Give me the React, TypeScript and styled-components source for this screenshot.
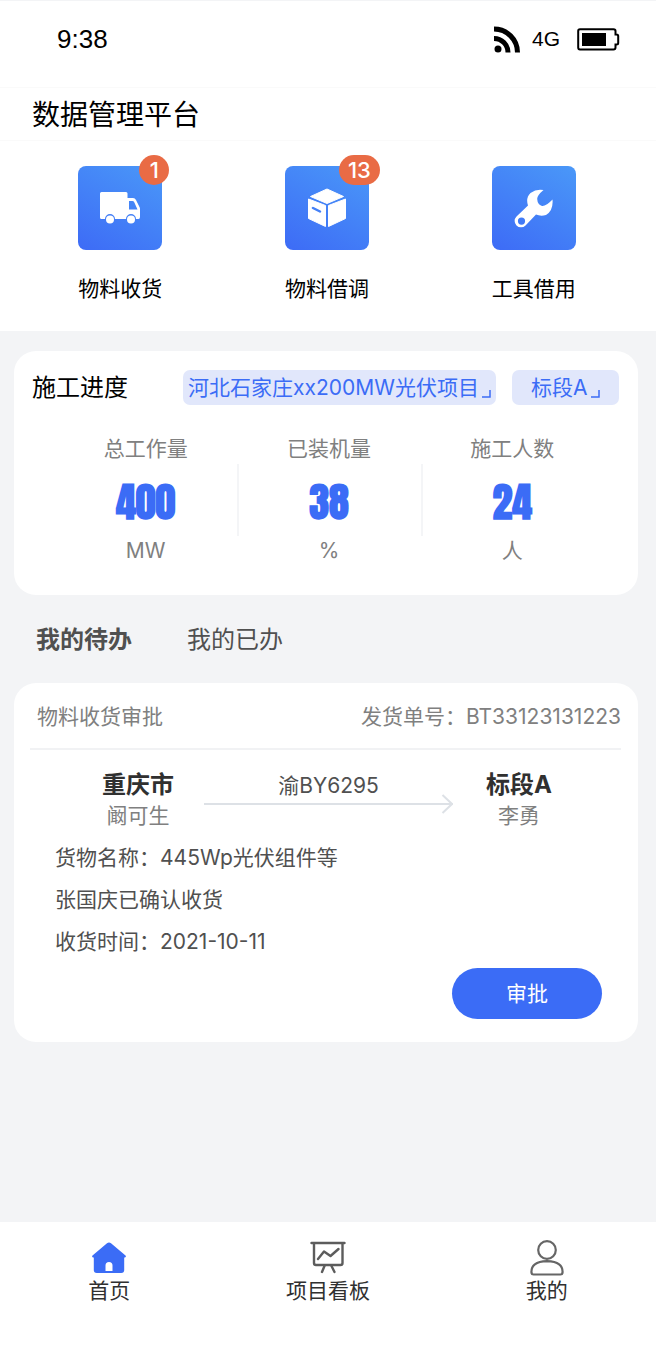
import React, { useState } from "react";
import styled, { createGlobalStyle } from "styled-components";

const blue = "#3b6cf6";

const GlobalStyle = createGlobalStyle`
  *, *::before, *::after { box-sizing: border-box; }
  body {
    margin: 0;
    background: #f3f4f6;
    color: #000;
    font-family: "Inter", "Noto Sans CJK SC", sans-serif;
    font-size: 21px;
    line-height: 30px;
  }
  button, select { font: inherit; color: inherit; border: 0; padding: 0; margin: 0; background: none; cursor: pointer; }
  h1, h2, p, dl, dt, dd { margin: 0; font-weight: 400; }
  svg { display: block; flex: none; }
`;

const Page = styled.div`
  min-height: 100vh;
  display: flex;
  flex-direction: column;
`;

const StatusBar = styled.div`
  display: flex;
  align-items: center;
  height: 87px;
  padding: 0 36px 10px 57px;
  background: #fff;
  border-top: 1px solid #f3f4f6;
  font-family: "Liberation Sans", sans-serif;
`;

const Clock = styled.time`
  margin-right: auto;
  font-size: 26px;
`;

const Network = styled.span`
  margin: 0 17px 0 11px;
`;

const Header = styled.header`
  padding: 7px 32px 5px;
  background: #fff;
  border-top: 1px solid #fafafa;
  border-bottom: 1px solid #fafafa;
`;

const Title = styled.h1`
  font-size: 28px;
  line-height: 40px;
`;

const Shortcuts = styled.nav`
  display: grid;
  grid-template-columns: repeat(3, 1fr);
  justify-items: center;
  padding: 25px 19px 27px 17px;
  background: #fff;
`;

const Shortcut = styled.button`
  display: flex;
  flex-direction: column;
  align-items: center;
  gap: 24px;
`;

const Tile = styled.span`
  position: relative;
  display: flex;
  align-items: center;
  justify-content: center;
  width: 84px;
  height: 84px;
  border-radius: 8px;
  background: linear-gradient(30deg, #3d6bf6, #4a98f8);
`;

const Badge = styled.span<{ $wide: boolean }>`
  position: absolute;
  top: -11px;
  left: 100%;
  min-width: 30px;
  height: 30px;
  margin-left: ${(p) => (p.$wide ? -30 : -23)}px;
  padding: 0 9px;
  border-radius: 15px;
  background: #e96b45;
  color: #fff;
  font-size: 22px;
  font-weight: 500;
`;

const Card = styled.section`
  margin: 0 18px 0 14px;
  border-radius: 22px;
  background: #fff;
`;

const ProgressCard = styled(Card)`
  margin-top: 20px;
  padding: 19px 19px 29px 18px;
`;

const CardHead = styled.div`
  display: flex;
  align-items: center;
  gap: 16px;
`;

const CardTitle = styled.h2`
  margin-right: auto;
  font-size: 24px;
  line-height: 34px;
`;

const Picker = styled.label<{ $inset: number }>`
  display: flex;
  align-items: center;
  height: 35px;
  padding: 0 ${(p) => p.$inset}px;
  border-radius: 7px;
  background: #e1e7fb;
  color: ${blue};

  select { appearance: none; height: 35px; outline: none; }
  svg { margin: 12px 0 0 3px; }
`;

const Stats = styled.dl`
  display: grid;
  grid-template-columns: repeat(3, 1fr);
  margin: 29px 15px 0 22px;
  color: #808080;
  text-align: center;
`;

const Stat = styled.div`
  display: grid;
  grid-template-rows: 30px 72px 30px;
  position: relative;

  & + &::before {
    content: "";
    position: absolute;
    left: 0;
    top: 30px;
    height: 72px;
    border-left: 2px solid #f4f5f7;
  }
`;

const StatValue = styled.dd`
  color: ${blue};
  font-family: Impact, Anton, Roboto, sans-serif;
  font-size: 40px;
  font-weight: 700;
  line-height: 76px;
`;

const Tabs = styled.div`
  display: flex;
  gap: 55px;
  padding: 28px 36px 26px;
`;

const Tab = styled.button<{ $active: boolean }>`
  color: #505050;
  font-size: 24px;
  line-height: 34px;
  font-weight: ${(p) => (p.$active ? 700 : 400)};
`;

const TaskCard = styled(Card)`
  padding: 19px 17px 23px 16px;
`;

const TaskHead = styled.div`
  display: flex;
  justify-content: space-between;
  padding: 0 0 16px 7px;
  border-bottom: 2px solid #f1f2f4;
  color: #808080;
`;

const Route = styled.div`
  display: flex;
  align-items: flex-start;
  justify-content: space-between;
  padding: 18px 69px 0 72px;
`;

const Stop = styled.div`
  display: flex;
  flex-direction: column;
  align-items: center;
  color: #808080;

  strong {
    color: #303030;
    font-size: 24px;
    line-height: 33px;
    font-weight: 700;
  }
`;

const Leg = styled.div`
  flex: 1;
  margin: 3px 33px 0 30px;
  color: #505050;
  text-align: center;
`;

const ArrowRow = styled.div`
  display: flex;
  align-items: center;
  height: 20px;
  margin-top: -7px;

  &::before {
    content: "";
    flex: 1;
    height: 2px;
    margin-right: -12px;
    background: #dde1e6;
  }
`;

const Details = styled.div`
  display: flex;
  flex-direction: column;
  gap: 12px;
  padding: 12px 25px 11px;
  color: #505050;
`;

const Approve = styled.button`
  display: block;
  width: 150px;
  height: 51px;
  margin: 0 19px 0 auto;
  border-radius: 26px;
  background: ${blue};
  color: #fff;
`;

const BottomNav = styled.nav`
  display: grid;
  grid-template-columns: repeat(3, 1fr);
  margin-top: auto;
  padding: 18px 0 44px;
  background: #fff;
`;

const NavItem = styled.a`
  display: flex;
  flex-direction: column;
  align-items: center;
  color: #303030;
  text-decoration: none;
  line-height: 30px;
`;

const SignalIcon = () => (
  <svg width="27" height="27" viewBox="0 0 27 27" fill="none" stroke="#000" strokeWidth="5">
    <circle cx="4" cy="23" r="3.5" fill="#000" stroke="none" />
    <path d="M0 12.500A14 14 0 0 1 14 26.500" />
    <path d="M0 3A23.500 23.500 0 0 1 23.500 26.500" />
  </svg>
);

const BatteryIcon = () => (
  <svg width="43" height="23" viewBox="0 0 43 23">
    <path d="M3 1.200H36.500Q38.500 1.200 38.500 3V6.500H39.500Q41.200 6.500 41.200 8V15Q41.200 16.500 39.500 16.500H38.500V19.500Q38.500 21.500 36.500 21.500H3Q1.200 21.500 1.200 19.500V3Q1.200 1.200 3 1.200Z" fill="#fff" stroke="#000" strokeWidth="2" />
    <rect x="5" y="5" width="24" height="13" />
  </svg>
);

const TruckIcon = () => (
  <svg width="40" height="32" viewBox="0 0 40 32" fill="#fff">
    <path d="M1.500 0H26Q27.500 0 27.500 1.500V6H33Q35 6 36 8L39.500 15Q40 16 40 17V25Q40 27 38.500 27H36A5 5 0 0 0 26 27H15A5 5 0 0 0 5 27H1.500Q0 27 0 25.500V1.500Q0 0 1.500 0ZM29 9V17.500H37.500L34 9.800Q33.500 9 32.500 9Z" fillRule="evenodd" />
    <circle cx="10" cy="27.500" r="4" />
    <circle cx="31" cy="27.500" r="4" />
  </svg>
);

const BoxIcon = () => (
  <svg width="40" height="40" viewBox="0 0 40 40" fill="#fff" stroke="#fff" strokeWidth="1" strokeLinejoin="round">
    <path d="M20 1L36.500 8.500L20 15.500L3.500 8.500Z" />
    <path d="M1.500 11L18.500 17.500V38.500L1.500 30.500Z" />
    <path d="M21.500 17.500L38.500 11V30.500L21.500 38.500Z" />
    <path d="M6 20L13 23.500" stroke="#4480f7" strokeWidth="2.500" strokeLinecap="round" />
  </svg>
);

const WrenchIcon = () => (
  <svg width="40" height="40" viewBox="0 0 40 40" fill="#fff">
    <path d="M29.500 2Q23 7.500 23.200 11Q23.500 16.500 28 18Q32 18.500 38.500 11.500Q39.500 22.500 32 27Q26.500 28.500 22 26.500L11.500 37.500A6.300 6.300 0 0 1 2.500 28.500L14 17.500Q11.500 10 16.500 5Q22.500 .5 29.500 2ZM7.500 29.500A3.600 3.600 0 1 0 7.500 36.700A3.600 3.600 0 1 0 7.500 29.500Z" fillRule="evenodd" />
  </svg>
);

const CornerIcon = () => (
  <svg width="9" height="8" viewBox="0 0 9 8" fill="none" stroke={blue} strokeWidth="1.500">
    <path d="M0 7H8V0" />
  </svg>
);

const ArrowHead = () => (
  <svg width="12" height="20" viewBox="0 0 12 20" fill="none" stroke="#dde1e6" strokeWidth="2">
    <path d="M1.500 1L11 10L1.500 19" />
  </svg>
);

const HomeIcon = () => (
  <svg width="36" height="36" viewBox="0 0 36 36" fill={blue}>
    <path d="M16 3.300Q18 1.500 20 3.300L34.500 15.500Q35.500 17 34 17.500H33.200V30Q33.200 33 30.200 33H5.800Q2.800 33 2.800 30V17.500H2Q.5 17 1.500 15.500ZM14.500 31H21.500V25.500A3.500 3.500 0 0 0 14.500 25.500Z" fillRule="evenodd" />
  </svg>
);

const BoardIcon = () => (
  <svg width="36" height="36" viewBox="0 0 36 36" fill="none" stroke="#5c5c5c" strokeWidth="2.400" strokeLinecap="round" strokeLinejoin="round">
    <path d="M1.500 3H34.500M4 3V23Q4 25 6 25H30.500Q32.500 25 32.500 23V3" />
    <path d="M8 19L14 11.500L20.500 16L28.500 9M14.500 26L12 32M21.500 26L24.500 32" />
  </svg>
);

const UserIcon = () => (
  <svg width="36" height="36" viewBox="0 0 36 36" fill="none" stroke="#666" strokeWidth="2.200">
    <circle cx="18" cy="10" r="8.800" />
    <path d="M2.500 33Q1.500 21.500 18 21.200Q34.500 21.500 33.500 33Q33.300 34.500 31.500 34.500H4.500Q2.700 34.500 2.500 33Z" />
  </svg>
);

const shortcuts = [
  { label: "物料收货", count: 1, Icon: TruckIcon },
  { label: "物料借调", count: 13, Icon: BoxIcon },
  { label: "工具借用", count: 0, Icon: WrenchIcon },
];

const stats = [
  { label: "总工作量", value: 400, unit: "MW" },
  { label: "已装机量", value: 38, unit: "%" },
  { label: "施工人数", value: 24, unit: "人" },
];

const navItems = [
  { label: "首页", Icon: HomeIcon },
  { label: "项目看板", Icon: BoardIcon },
  { label: "我的", Icon: UserIcon },
];

export default function App() {
  const [tab, setTab] = useState(0);
  return (
    <Page>
      <GlobalStyle />
      <StatusBar>
        <Clock>9:38</Clock>
        <SignalIcon />
        <Network>4G</Network>
        <BatteryIcon />
      </StatusBar>
      <Header>
        <Title>数据管理平台</Title>
      </Header>
      <Shortcuts>
        {shortcuts.map(({ label, count, Icon }) => (
          <Shortcut key={label} type="button">
            <Tile>
              <Icon />
              {count > 0 && <Badge $wide={count > 9}>{count}</Badge>}
            </Tile>
            {label}
          </Shortcut>
        ))}
      </Shortcuts>

      <ProgressCard>
        <CardHead>
          <CardTitle>施工进度</CardTitle>
          <Picker $inset={5}>
            <select aria-label="项目">
              <option>河北石家庄xx200MW光伏项目</option>
            </select>
            <CornerIcon />
          </Picker>
          <Picker $inset={19}>
            <select aria-label="标段">
              <option>标段A</option>
            </select>
            <CornerIcon />
          </Picker>
        </CardHead>
        <Stats>
          {stats.map((s) => (
            <Stat key={s.label}>
              <dt>{s.label}</dt>
              <StatValue>{s.value}</StatValue>
              <dd>{s.unit}</dd>
            </Stat>
          ))}
        </Stats>
      </ProgressCard>

      <Tabs role="tablist">
        {["我的待办", "我的已办"].map((name, i) => (
          <Tab key={name} type="button" role="tab" aria-selected={tab === i} $active={tab === i} onClick={() => setTab(i)}>
            {name}
          </Tab>
        ))}
      </Tabs>

      <TaskCard>
        <TaskHead>
          <span>物料收货审批</span>
          <span>发货单号：BT33123131223</span>
        </TaskHead>
        <Route>
          <Stop>
            <strong>重庆市</strong>
            <span>阚可生</span>
          </Stop>
          <Leg>
            <span>渝BY6295</span>
            <ArrowRow>
              <ArrowHead />
            </ArrowRow>
          </Leg>
          <Stop>
            <strong>标段A</strong>
            <span>李勇</span>
          </Stop>
        </Route>
        <Details>
          <p>货物名称：445Wp光伏组件等</p>
          <p>张国庆已确认收货</p>
          <p>收货时间：2021-10-11</p>
        </Details>
        <Approve type="button">审批</Approve>
      </TaskCard>

      <BottomNav>
        {navItems.map(({ label, Icon }) => (
          <NavItem key={label} href="#">
            <Icon />
            {label}
          </NavItem>
        ))}
      </BottomNav>
    </Page>
  );
}
